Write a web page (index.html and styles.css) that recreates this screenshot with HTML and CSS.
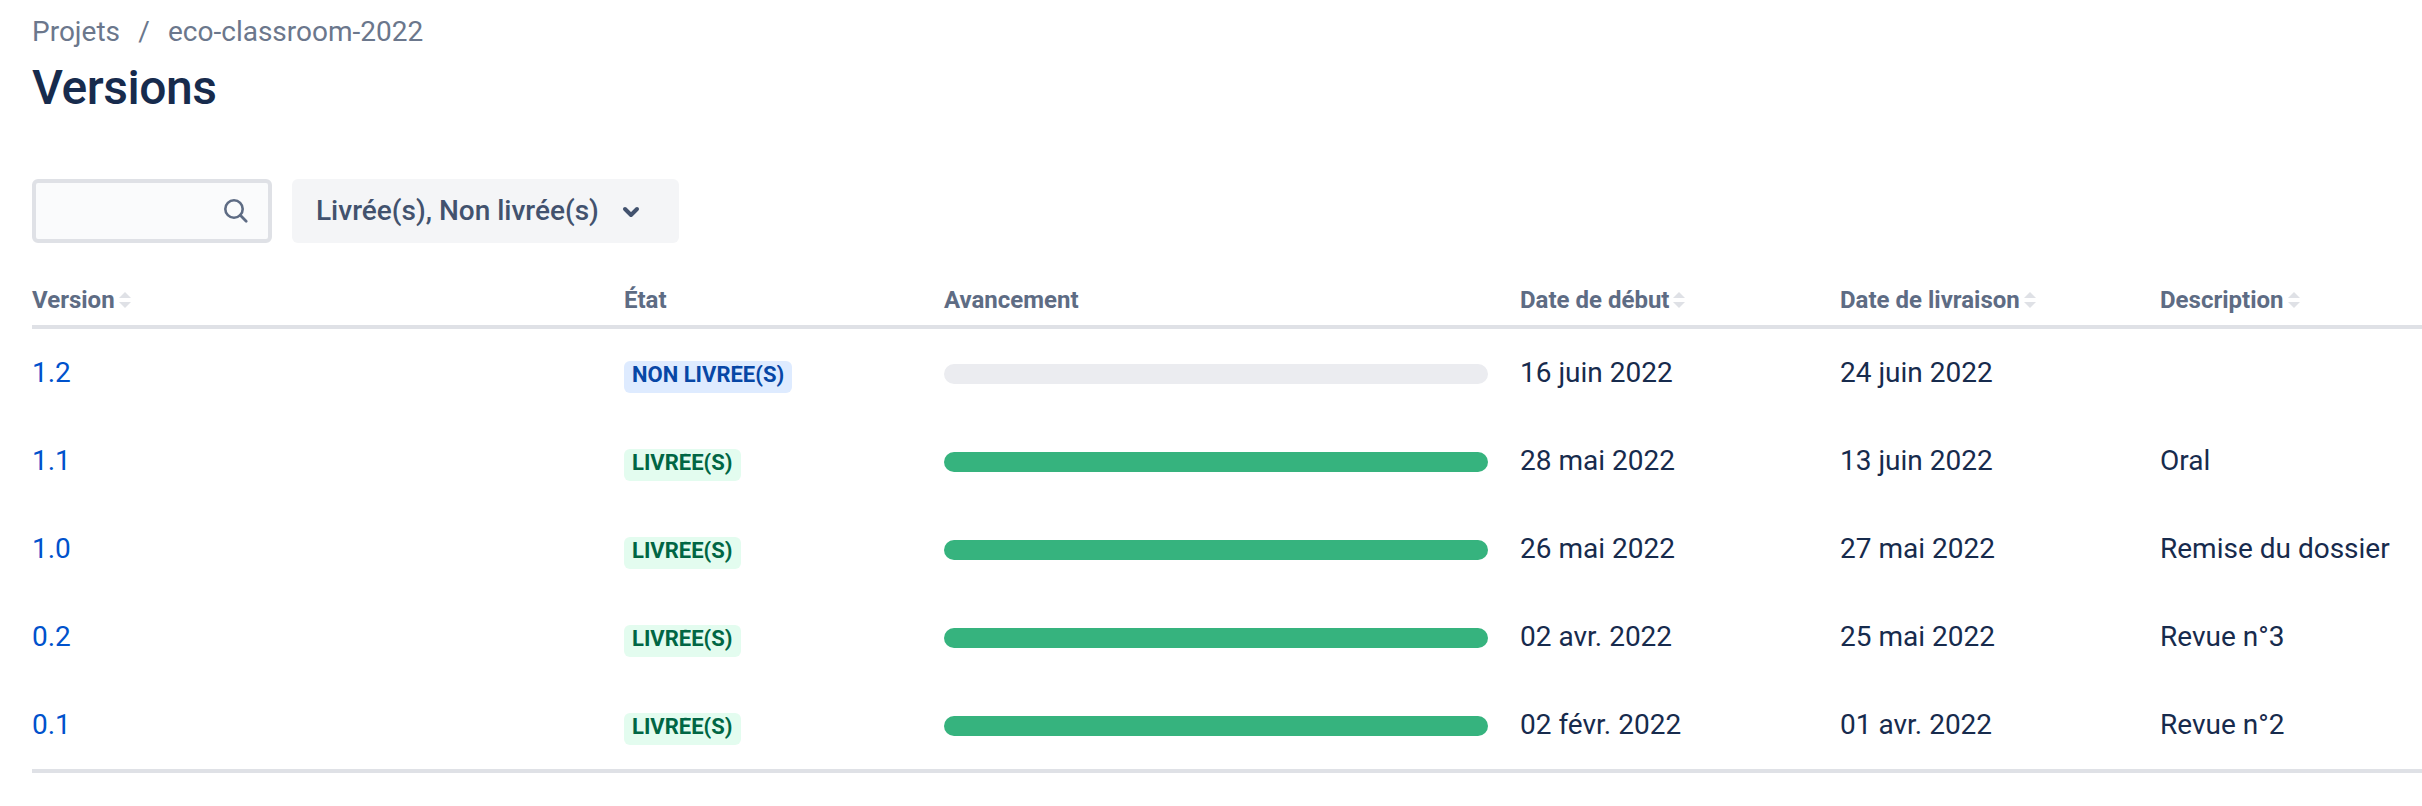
FILE: index.html
```html
<!DOCTYPE html>
<html lang="fr">
<head>
<meta charset="utf-8">
<title>Versions</title>
<link rel="stylesheet" href="styles.css">
</head>
<body>
<main class="page">
  <nav class="breadcrumbs"><a>Projets</a><span class="separator">/</span><a>eco-classroom-2022</a></nav>
  <h1 class="title">Versions</h1>
  <div class="filters">
    <div class="search">
      <svg class="search-icon" viewBox="0 0 48 48"><circle cx="22" cy="22" r="8.7" fill="none" stroke="currentColor" stroke-width="2.6"/><path d="M28.3 28.3L34.2 34.2" fill="none" stroke="currentColor" stroke-width="2.8" stroke-linecap="round"/></svg>
    </div>
    <button class="dropdown"><span>Livrée(s), Non livrée(s)</span><svg class="chevron" viewBox="0 0 48 48"><path d="M18 22l6 6 6-6" fill="none" stroke="currentColor" stroke-width="4" stroke-linecap="round" stroke-linejoin="round"/></svg></button>
  </div>
  <div class="table">
    <div class="row head">
      <div>Version<i class="sort"></i></div><div>État</div><div>Avancement</div><div>Date de début<i class="sort"></i></div><div>Date de livraison<i class="sort"></i></div><div>Description<i class="sort"></i></div>
    </div>
    <div class="row"><a class="link">1.2</a><div class="state"><span class="lozenge blue"><span>Non livrée(s)</span></span></div><div class="progress"></div><div>16 juin 2022</div><div>24 juin 2022</div><div></div></div>
    <div class="row"><a class="link">1.1</a><div class="state"><span class="lozenge green"><span>Livrée(s)</span></span></div><div class="progress done"></div><div>28 mai 2022</div><div>13 juin 2022</div><div>Oral</div></div>
    <div class="row"><a class="link">1.0</a><div class="state"><span class="lozenge green"><span>Livrée(s)</span></span></div><div class="progress done"></div><div>26 mai 2022</div><div>27 mai 2022</div><div>Remise du dossier</div></div>
    <div class="row"><a class="link">0.2</a><div class="state"><span class="lozenge green"><span>Livrée(s)</span></span></div><div class="progress done"></div><div>02 avr. 2022</div><div>25 mai 2022</div><div>Revue n°3</div></div>
    <div class="row"><a class="link">0.1</a><div class="state"><span class="lozenge green"><span>Livrée(s)</span></span></div><div class="progress done"></div><div>02 févr. 2022</div><div>01 avr. 2022</div><div>Revue n°2</div></div>
  </div>
</main>
</body>
</html>
```
FILE: styles.css
```css
* { box-sizing: border-box; }
body {
  margin: 0;
  background: #fff;
  color: #172b4d;
  font: 28px/40px Roboto, sans-serif;
  overflow: hidden;
}
.page { padding: 12px 0 0 32px; }
.breadcrumbs {
  display: flex;
  height: 40px;
  color: #6b778c;
}
.separator { width: 16px; margin: 0 16px; text-align: center; }
.title {
  margin: 8px 0 0;
  font-size: 48px;
  line-height: 56px;
  font-weight: 500;
  letter-spacing: -0.01em;
}
.filters { display: flex; gap: 20px; margin-top: 63px; }
.search {
  display: flex;
  align-items: center;
  justify-content: flex-end;
  width: 240px;
  height: 64px;
  padding-right: 8px;
  border: 4px solid #dfe1e6;
  border-radius: 6px;
  background: #fafbfc;
  color: #5e6c84;
}
.search-icon, .chevron { width: 48px; height: 48px; }
.dropdown {
  display: flex;
  align-items: center;
  width: 387px;
  height: 64px;
  padding: 0 24px;
  border: 0;
  border-radius: 6px;
  background: #f4f5f7;
  color: #42526e;
  font: 500 28px/64px Roboto, sans-serif;
  white-space: nowrap;
}
.chevron { margin-left: 8px; }
.table { margin-top: 28px; border-bottom: 4px solid #dfe1e6; }
.row {
  display: grid;
  grid-template-columns: 592px 320px 576px 320px 320px 262px;
  height: 88px;
  padding-top: 24px;
  white-space: nowrap;
}
.head {
  height: 58px;
  padding-top: 9px;
  border-bottom: 4px solid #dfe1e6;
  color: #5e6c84;
  font-size: 24px;
  font-weight: 700;
}
.head > div { display: flex; }
.sort {
  display: flex;
  flex-direction: column;
  gap: 4px;
  margin: 12px 0 0 4px;
}
.sort::before, .sort::after {
  content: "";
  border: 6px solid transparent;
}
.sort::before { border-top: 0; border-bottom-color: #dfe1e6; }
.sort::after { border-bottom: 0; border-top-color: #dfe1e6; }
.link { color: #0052cc; }
.state { padding-top: 8px; line-height: 0; }
.lozenge {
  display: inline-block;
  height: 32px;
  padding: 4px 0 6px;
  border-radius: 6px;
  font-size: 22px;
  font-weight: 700;
  line-height: 20px;
  text-transform: uppercase;
}
.lozenge span { display: block; padding: 0 8px 2px; overflow: hidden; }
.blue { background: #deebff; color: #0747a6; }
.green { background: #e3fcef; color: #006644; }
.progress {
  width: 544px;
  height: 20px;
  margin-top: 11px;
  border-radius: 10px;
  background: #ebecf0;
}
.done { background: #36b37e; }
```
